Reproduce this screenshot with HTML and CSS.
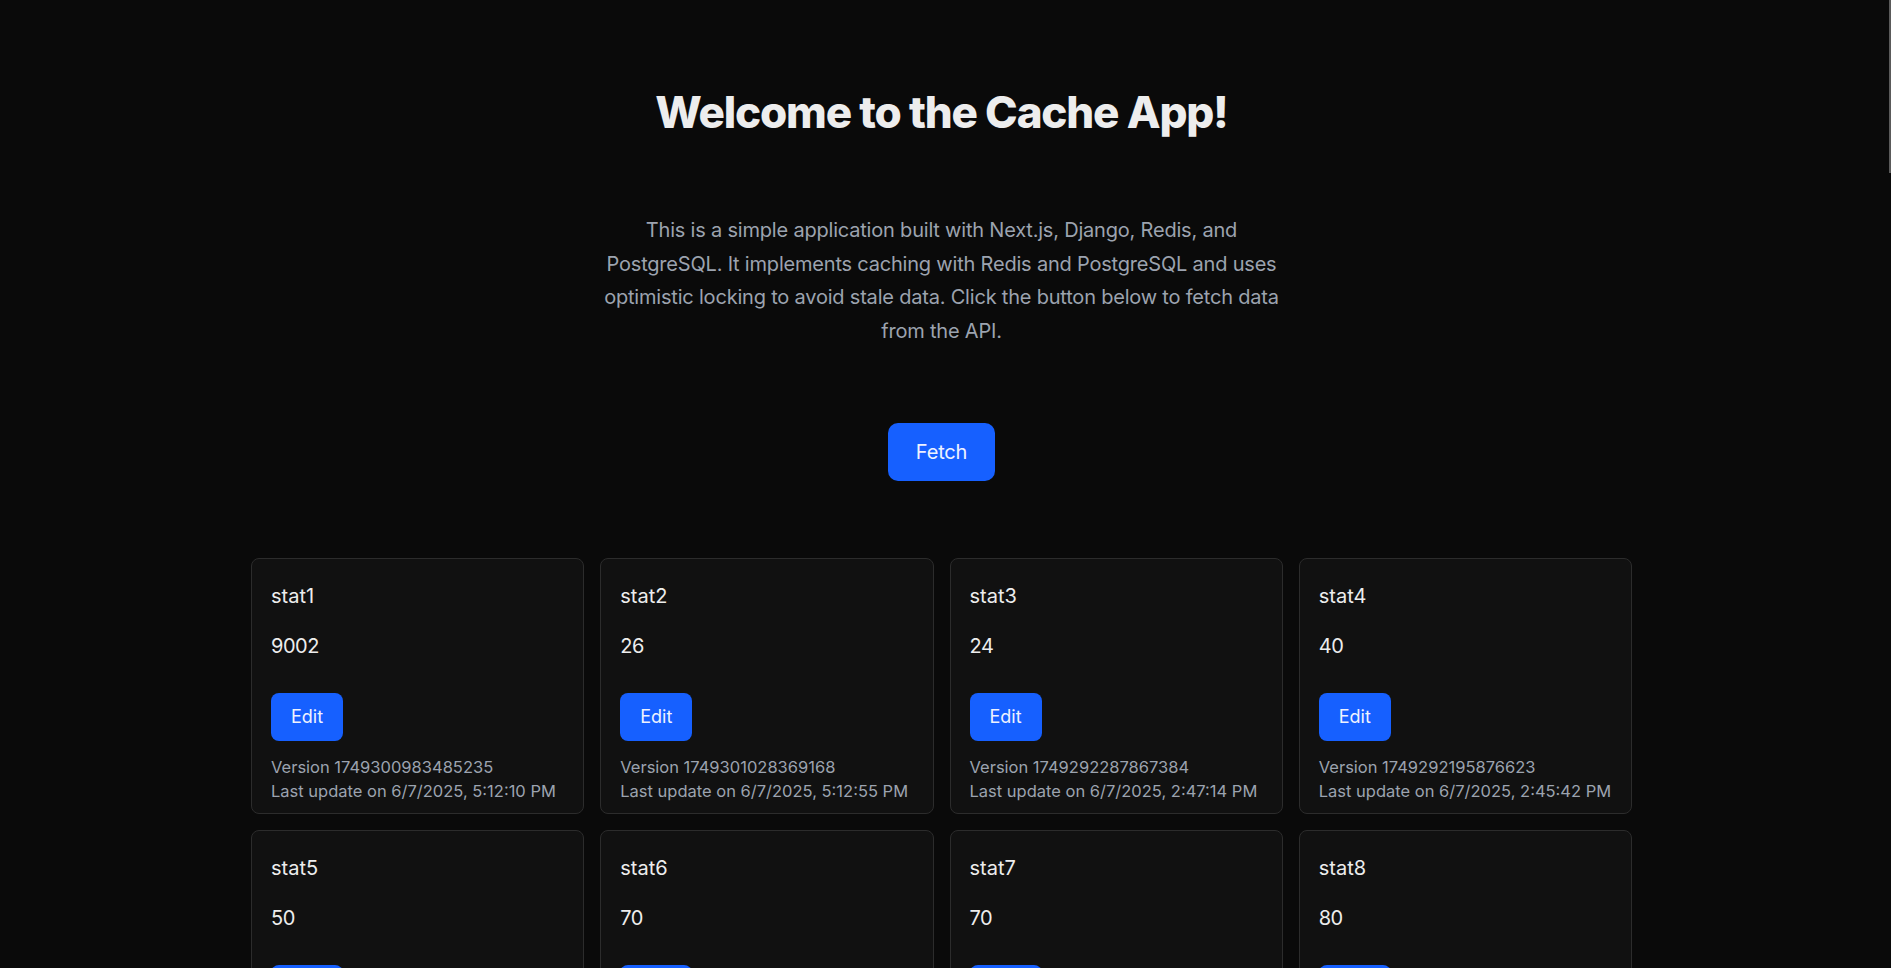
FILE: index.html
```html
<!DOCTYPE html>
<html lang="en">
<head>
<meta charset="utf-8">
<title>Cache App</title>
<link rel="stylesheet" href="styles.css">
</head>
<body>
<div class="scroll-thumb"></div>
<main class="page">
  <h1 class="title">Welcome to the Cache App!</h1>
  <p class="intro">This is a simple application built with Next.js, Django, Redis, and PostgreSQL. It implements caching with Redis and PostgreSQL and uses optimistic locking to avoid stale data. Click the button below to fetch data from the API.</p>
  <button class="fetch-btn">Fetch</button>
  <section class="grid">
    <div class="card">
      <div class="card-name">stat1</div>
      <div class="card-value">9002</div>
      <button class="edit-btn">Edit</button>
      <div class="card-meta">Version 1749300983485235<br>Last update on 6/7/2025, 5:12:10 PM</div>
    </div>
    <div class="card">
      <div class="card-name">stat2</div>
      <div class="card-value">26</div>
      <button class="edit-btn">Edit</button>
      <div class="card-meta">Version 1749301028369168<br>Last update on 6/7/2025, 5:12:55 PM</div>
    </div>
    <div class="card">
      <div class="card-name">stat3</div>
      <div class="card-value">24</div>
      <button class="edit-btn">Edit</button>
      <div class="card-meta">Version 1749292287867384<br>Last update on 6/7/2025, 2:47:14 PM</div>
    </div>
    <div class="card">
      <div class="card-name">stat4</div>
      <div class="card-value">40</div>
      <button class="edit-btn">Edit</button>
      <div class="card-meta">Version 1749292195876623<br>Last update on 6/7/2025, 2:45:42 PM</div>
    </div>
    <div class="card">
      <div class="card-name">stat5</div>
      <div class="card-value">50</div>
      <button class="edit-btn">Edit</button>
      <div class="card-meta">Version 1749292195876624<br>Last update on 6/7/2025, 2:45:42 PM</div>
    </div>
    <div class="card">
      <div class="card-name">stat6</div>
      <div class="card-value">70</div>
      <button class="edit-btn">Edit</button>
      <div class="card-meta">Version 1749292195876625<br>Last update on 6/7/2025, 2:45:42 PM</div>
    </div>
    <div class="card">
      <div class="card-name">stat7</div>
      <div class="card-value">70</div>
      <button class="edit-btn">Edit</button>
      <div class="card-meta">Version 1749292195876626<br>Last update on 6/7/2025, 2:45:42 PM</div>
    </div>
    <div class="card">
      <div class="card-name">stat8</div>
      <div class="card-value">80</div>
      <button class="edit-btn">Edit</button>
      <div class="card-meta">Version 1749292195876627<br>Last update on 6/7/2025, 2:45:42 PM</div>
    </div>
  </section>
</main>
</body>
</html>
```

FILE: styles.css
```css
html {
  background: #0a0a0a;
}
body {
  margin: 0;
  background: #0a0a0a;
  color: #ededed;
  font-family: Inter, "Noto Sans", sans-serif;
}
.scroll-thumb {
  position: fixed;
  top: 0;
  right: 0;
  width: 2px;
  height: 173px;
  background: #5a5a5a;
}
.page {
  display: flex;
  flex-direction: column;
  align-items: center;
  padding: 90px 8px 80px 0;
}
.title {
  margin: 0;
  font-size: 44px;
  line-height: 44px;
  font-weight: 800;
  color: #ededed;
  letter-spacing: -1.2px;
}
.intro {
  margin: 80px 0 0;
  max-width: 680px;
  text-align: center;
  font-size: 20px;
  line-height: 33.6px;
  letter-spacing: -0.2px;
  color: #9ca3af;
}
.fetch-btn {
  margin-top: 75px;
  padding: 16px 28px;
  font-family: inherit;
  font-size: 20px;
  line-height: 26px;
  letter-spacing: -0.2px;
  color: #eef2ff;
  background: #1660ff;
  border: none;
  border-radius: 10px;
}
.grid {
  margin-top: 77px;
  width: 1381px;
  display: grid;
  grid-template-columns: repeat(4, 1fr);
  gap: 16px;
}
.card {
  display: flex;
  flex-direction: column;
  align-items: flex-start;
  background: #111111;
  border: 1px solid #2c2c2c;
  border-radius: 8px;
  padding: 23px 19px 10px;
}
.card-name,
.card-value {
  font-size: 20px;
  line-height: 28px;
  color: #ededed;
}
.card-name {
  margin-bottom: 22px;
}
.card-value {
  margin-bottom: 33px;
  letter-spacing: -0.5px;
}
.edit-btn {
  padding: 10px 20px;
  font-family: inherit;
  font-size: 18px;
  line-height: 28px;
  color: #eef2ff;
  background: #1660ff;
  border: none;
  border-radius: 8px;
}
.card-meta {
  margin-top: 14px;
  font-size: 16.5px;
  line-height: 24px;
  color: #9ca3af;
}
```
